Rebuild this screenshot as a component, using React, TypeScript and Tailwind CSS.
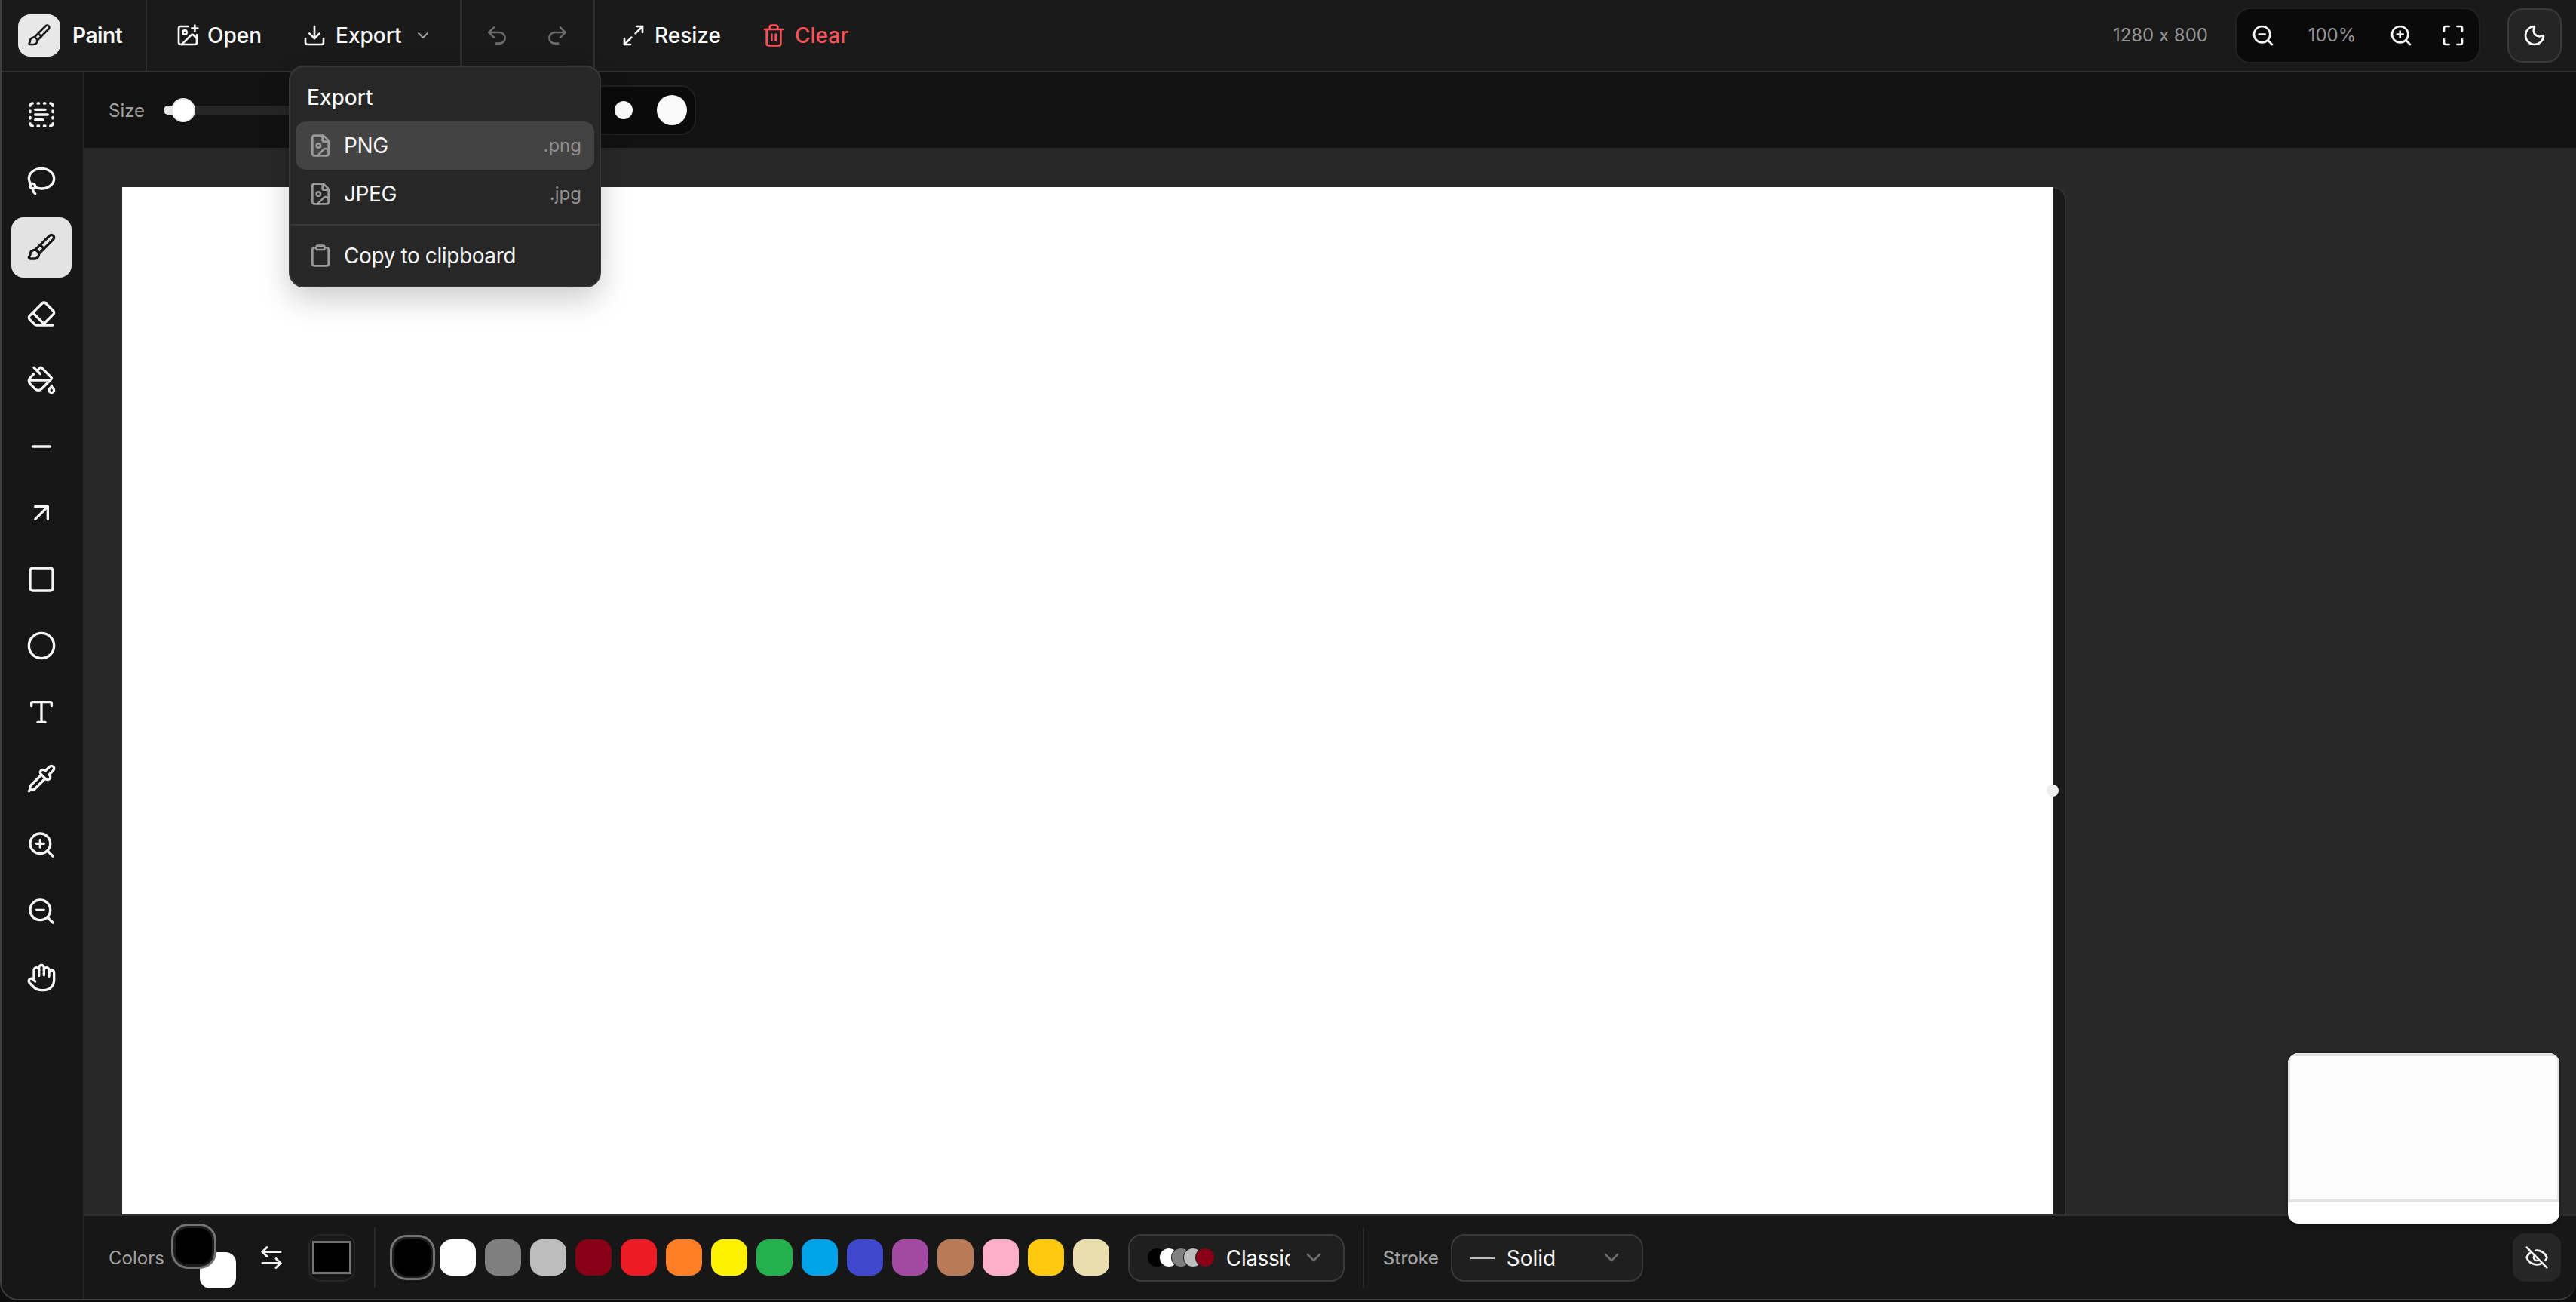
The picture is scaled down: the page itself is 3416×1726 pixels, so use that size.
import type { ReactNode } from "react";
import {
  ArrowLeftRight,
  ArrowUpRight,
  Brush,
  ChevronDown,
  Circle,
  Clipboard,
  Download,
  Eraser,
  EyeOff,
  FileImage,
  Hand,
  ImagePlus,
  Lasso,
  Maximize,
  Maximize2,
  Minus,
  Moon,
  PaintBucket,
  Pipette,
  Redo2,
  Square,
  TextSelect,
  Trash2,
  Type,
  Undo2,
  ZoomIn,
  ZoomOut,
} from "lucide-react";

const tools = [
  { id: "select", icon: TextSelect },
  { id: "lasso", icon: Lasso },
  { id: "brush", icon: Brush },
  { id: "eraser", icon: Eraser },
  { id: "fill", icon: PaintBucket },
  { id: "line", icon: Minus },
  { id: "arrow", icon: ArrowUpRight },
  { id: "rect", icon: Square },
  { id: "ellipse", icon: Circle },
  { id: "text", icon: Type },
  { id: "picker", icon: Pipette },
  { id: "zoomIn", icon: ZoomIn },
  { id: "zoomOut", icon: ZoomOut },
  { id: "pan", icon: Hand },
];

const palette = [
  "bg-[#000000]",
  "bg-[#ffffff]",
  "bg-[#7f7f7f]",
  "bg-[#bdbdbd]",
  "bg-[#880015]",
  "bg-[#ed1c24]",
  "bg-[#ff7f27]",
  "bg-[#fff200]",
  "bg-[#22b14c]",
  "bg-[#00a2e8]",
  "bg-[#3f48cc]",
  "bg-[#a349a4]",
  "bg-[#b97a57]",
  "bg-[#ffaec9]",
  "bg-[#ffc90e]",
  "bg-[#e9dfae]",
];

const previewDots = [
  "bg-[#000000]",
  "bg-[#ffffff]",
  "bg-[#7f7f7f]",
  "bg-[#bdbdbd]",
  "bg-[#880015]",
];

const brushDots = [
  "size-[8px]",
  "size-[12px]",
  "size-[16px]",
  "size-[24px]",
  "size-[40px]",
];

function TopButton({
  icon,
  label,
  className = "text-[#fafafa]",
  gap = "gap-[12px]",
  children,
}: {
  icon: ReactNode;
  label: string;
  className?: string;
  gap?: string;
  children?: ReactNode;
}) {
  return (
    <button className={`flex h-[64px] items-center px-[18px] text-[28px] font-medium ${gap} ${className}`}>
      {icon}
      <span>{label}</span>
      {children}
    </button>
  );
}

function MenuRow({
  icon,
  label,
  ext,
  active,
}: {
  icon: ReactNode;
  label: string;
  ext?: string;
  active?: boolean;
}) {
  return (
    <div className={`flex h-[64px] items-center rounded-[14px] pl-[17px] pr-[17px] ${active ? "bg-[#434343]" : ""}`}>
      <span className="mr-[15px] flex w-[32px] justify-center text-[#9a9a9a]">{icon}</span>
      <span className="text-[28px] tracking-[-0.4px] text-[#f5f5f5]">{label}</span>
      {ext && <span className="ml-auto text-[24px] text-[#8f8f8f]">{ext}</span>}
    </div>
  );
}

function ExportMenu() {
  return (
    <div className="absolute left-[381px] top-[87px] z-20 h-[294px] w-[414px] rounded-[20px] border-2 border-[#383838] bg-[#272727] p-[7px] shadow-[0_16px_40px_rgba(0,0,0,0.2)]">
      <div className="flex h-[65px] items-center pl-[15px] text-[28px] font-medium text-[#fafafa]">Export</div>
      <MenuRow active icon={<FileImage size={32} />} label="PNG" ext=".png" />
      <MenuRow icon={<FileImage size={32} />} label="JPEG" ext=".jpg" />
      <div className="-mx-[7px] my-[8px] h-[2px] bg-[#383838]" />
      <MenuRow icon={<Clipboard size={32} />} label="Copy to clipboard" />
    </div>
  );
}

function Header() {
  return (
    <header className="flex h-[96px] shrink-0 items-center border-b-2 border-[#333333] bg-[#1a1a1a]">
      <div className="flex h-full w-[193px] items-center gap-[16px] border-r-2 border-[#2e2e2e] pl-[22px]">
        <div className="flex size-[56px] items-center justify-center rounded-[16px] bg-[#e8e8e8] text-[#1a1a1a]">
          <Brush size={32} />
        </div>
        <span className="text-[28px] font-semibold tracking-[-0.4px] text-[#fafafa]">Paint</span>
      </div>

      <div className="flex h-full w-[417px] items-center gap-[18px] border-r-2 border-[#2e2e2e] pl-[20px]">
        <TopButton icon={<ImagePlus size={32} />} label="Open" gap="gap-[10px]" />
        <TopButton icon={<Download size={32} />} label="Export">
          <ChevronDown size={24} className="ml-[4px] text-[#a3a3a3]" />
        </TopButton>
      </div>

      <div className="flex h-full w-[177px] items-center gap-[16px] border-r-2 border-[#2e2e2e] pl-[15px] text-[#6b6b6b]">
        <button className="flex h-[64px] w-[64px] items-center justify-center">
          <Undo2 size={32} />
        </button>
        <button className="flex h-[64px] w-[64px] items-center justify-center">
          <Redo2 size={32} />
        </button>
      </div>

      <div className="flex h-full items-center gap-[18px] pl-[17px]">
        <TopButton icon={<Maximize2 size={32} />} label="Resize" />
        <TopButton icon={<Trash2 size={32} />} label="Clear" className="text-[#f7525a]" />
      </div>

      <div className="ml-auto flex items-center gap-[36px] pr-[19px]">
        <span className="text-[24px] text-[#949494] [font-feature-settings:'calt'_0]">1280 x 800</span>
        <div className="flex h-[74px] items-center rounded-[20px] border-2 border-[#222222] bg-[#0a0a0a] pl-[5px] pr-[4px] text-[#f5f5f5]">
          <button className="flex w-[60px] justify-center">
            <ZoomOut size={32} />
          </button>
          <span className="w-[123px] text-center text-[24px] text-[#949494]">100%</span>
          <button className="flex w-[60px] justify-center">
            <ZoomIn size={32} />
          </button>
          <button className="ml-[9px] flex w-[60px] justify-center">
            <Maximize size={32} />
          </button>
        </div>
        <button className="flex size-[72px] items-center justify-center rounded-[20px] border-2 border-[#3a3a3a] bg-[#242424] text-[#fafafa]">
          <Moon size={32} />
        </button>
      </div>
    </header>
  );
}

function ToolRail() {
  return (
    <aside className="flex w-[110px] shrink-0 flex-col gap-[8px] border-r-2 border-[#2a2a2a] bg-[#171717] pl-[13px] pt-[16px]">
      {tools.map(({ id, icon: Icon }) => (
        <button
          key={id}
          className={`flex size-[80px] items-center justify-center rounded-[16px] ${
            id === "brush" ? "bg-[#e3e3e3] text-[#171717]" : "text-[#f5f5f5]"
          }`}
        >
          <Icon size={40} />
        </button>
      ))}
    </aside>
  );
}

function OptionsBar() {
  return (
    <div className="flex h-[100px] shrink-0 items-center gap-[26px] bg-[#121212] pl-[32px]">
      <div className="flex items-center gap-[25px]">
        <span className="mt-[2px] text-[24px] text-[#9f9f9f]">Size</span>
        <div className="relative h-[12px] w-[360px] rounded-full bg-[#262626]">
          <div className="h-full w-[26px] rounded-l-full bg-[#e5e5e5]" />
          <div className="absolute left-[10px] top-[-10px] size-[32px] rounded-full border-2 border-[#e5e5e5] bg-white" />
        </div>
      </div>
      <div className="flex h-[66px] items-center gap-[8px] rounded-[20px] border-2 border-[#1f1f1f] bg-[#0a0a0a] px-[2px]">
        {brushDots.map((dot) => (
          <div key={dot} className="flex w-[56px] justify-center">
            <div className={`rounded-full bg-[#fafafa] ${dot}`} />
          </div>
        ))}
      </div>
    </div>
  );
}

function CanvasArea() {
  return (
    <div className="flex min-h-0 flex-1 overflow-hidden bg-[#282828] pl-[50px] pt-[52px]">
      <div className="relative h-[1600px] w-[2560px] shrink-0 bg-white">
        <div className="absolute right-[-8px] top-[792px] z-10 size-[16px] rounded-full bg-[#eeeeee]" />
      </div>
      <div className="h-[1600px] w-[18px] shrink-0 rounded-tr-[16px] border-r-2 border-t-2 border-[#333333] bg-[#1a1a1a]" />
    </div>
  );
}

function Minimap() {
  return (
    <div className="absolute right-[22px] top-[1396px] z-10 h-[226px] w-[360px] overflow-hidden rounded-[14px] bg-white shadow-[0_2px_4px_rgba(0,0,0,0.5)]">
      <div className="h-[198px] border-x-[3px] border-y-[4px] border-[#e3e3e3] bg-[#fcfcfc]" />
    </div>
  );
}

function Swatch({ color, selected }: { color: string; selected?: boolean }) {
  return (
    <div
      className={`size-[48px] shrink-0 rounded-[16px] ${color} ${
        selected ? "shadow-[0_0_0_3px_#1c1c1c,0_0_0_6px_#737373]" : ""
      }`}
    />
  );
}

function Divider() {
  return <div className="h-[80px] w-[2px] shrink-0 bg-[#2a2a2a]" />;
}

function BottomBar() {
  return (
    <div className="flex h-[112px] shrink-0 items-center border-t-2 border-[#303030] bg-[#171717] pl-[32px] pr-[20px]">
      <span className="mt-[2px] text-[24px] text-[#a0a0a0]">Colors</span>

      <div className="relative mb-[4px] ml-[9px] size-[86px] shrink-0">
        <div className="absolute bottom-0 right-0 size-[48px] rounded-[14px] bg-white" />
        <div className="absolute left-[6px] top-[6px]">
          <Swatch color="bg-black" selected />
        </div>
      </div>

      <button className="ml-[29px] text-[#f0f0f0]">
        <ArrowLeftRight size={36} />
      </button>

      <div className="ml-[31px] flex h-[63px] w-[62px] shrink-0 items-center justify-center rounded-[16px] border-2 border-[#262626]">
        <div className="h-[44px] w-[52px] border-[3px] border-[#737373] bg-black" />
      </div>

      <div className="ml-[25px]">
        <Divider />
      </div>

      <div className="ml-[25px] flex items-center gap-[12px]">
        {palette.map((color, i) => (
          <Swatch key={color} color={color} selected={i === 0} />
        ))}
      </div>

      <button className="ml-[25px] flex h-[63px] w-[287px] shrink-0 items-center rounded-[18px] border-2 border-[#3a3a3a] bg-[#1f1f1f] pl-[24px]">
        <span className="flex">
          {previewDots.map((dot, i) => (
            <span
              key={dot}
              className={`size-[24px] rounded-full ring-1 ring-[#1f1f1f] ${dot} ${i > 0 ? "-ml-[8px]" : ""}`}
            />
          ))}
        </span>
        <span className="ml-[16px] mt-[2px] w-[84px] overflow-hidden text-left text-[28px] tracking-[-0.4px] text-[#fafafa]">
          Classic
        </span>
        <ChevronDown size={32} className="ml-[16px] text-[#6b6b6b]" />
      </button>

      <div className="ml-[24px]">
        <Divider />
      </div>

      <span className="ml-[25px] mt-[2px] text-[24px] font-medium text-[#a0a0a0]">Stroke</span>

      <button className="ml-[16px] flex h-[63px] w-[255px] shrink-0 items-center rounded-[18px] border-2 border-[#3a3a3a] bg-[#1f1f1f] pl-[24px] pr-[24px]">
        <span className="h-[3px] w-[32px] bg-[#bdbdbd]" />
        <span className="ml-[16px] mt-[2px] text-[28px] text-[#fafafa]">Solid</span>
        <ChevronDown size={32} className="ml-auto text-[#6b6b6b]" />
      </button>

      <button className="ml-auto flex size-[64px] items-center justify-center rounded-[16px] bg-[#262626] text-[#f5f5f5]">
        <EyeOff size={32} />
      </button>
    </div>
  );
}

export default function App() {
  return (
    <div className="h-[1726px] w-[3416px] overflow-hidden bg-[#0d0d0d] font-['Inter',sans-serif]">
      <div className="relative flex h-[1724px] flex-col overflow-hidden rounded-b-[24px] border-b-2 border-l-2 border-[#3f3f3f] bg-[#171717]">
        <Header />
        <div className="flex min-h-0 flex-1">
          <ToolRail />
          <div className="flex min-w-0 flex-1 flex-col">
            <OptionsBar />
            <CanvasArea />
            <BottomBar />
          </div>
        </div>
        <ExportMenu />
        <Minimap />
      </div>
    </div>
  );
}
